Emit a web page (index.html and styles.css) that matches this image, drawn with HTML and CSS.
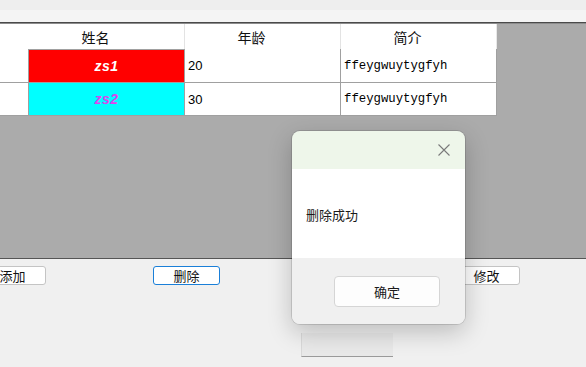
FILE: index.html
```html
<!DOCTYPE html>
<html>
<head>
<meta charset="utf-8">
<link rel="stylesheet" href="styles.css">
</head>
<body>
<div class="window">
  <div class="toolbar"><div class="tb-top"></div><div class="tb-bottom"></div></div>
  <div class="rule"></div>
  <div class="view">
    <div class="grid">
      <div class="h-cell h-corner"></div>
      <div class="h-cell">姓名</div>
      <div class="h-cell">年龄</div>
      <div class="h-cell h-last">简介</div>

      <div class="cell rowhead"></div>
      <div class="cell name red">zs1</div>
      <div class="cell num">20</div>
      <div class="cell intro">ffeygwuytygfyh</div>

      <div class="cell rowhead"></div>
      <div class="cell name cyan">zs2</div>
      <div class="cell num">30</div>
      <div class="cell intro">ffeygwuytygfyh</div>
    </div>
  </div>
  <div class="rule-bottom"></div>
  <div class="actions">
    <button class="btn btn-add">添加</button>
    <button class="btn btn-del">删除</button>
    <button class="btn btn-edit">修改</button>
  </div>
  <div class="lower">
    <div class="ghost"></div>
  </div>
</div>

<div class="dialog">
  <div class="dlg-head">
    <svg class="close" width="14" height="14" viewBox="0 0 14 14"><path d="M1.5 1.5 L12.5 12.5 M12.5 1.5 L1.5 12.5" stroke="#7a7a7a" stroke-width="1.1" fill="none"/></svg>
  </div>
  <div class="dlg-body">删除成功</div>
  <div class="dlg-foot"><button class="ok">确定</button></div>
</div>
</body>
</html>
```
FILE: styles.css
```css
html, body {
  margin: 0;
  padding: 0;
}
body {
  width: 586px;
  height: 367px;
  overflow: hidden;
  position: relative;
  background: #f0f0f0;
  font-family: "Noto Sans CJK SC", "Noto Sans", sans-serif;
}
.window {
  display: flex;
  flex-direction: column;
  height: 367px;
}
.toolbar { display: flex; flex-direction: column; }
.tb-top { height: 10px; background: #eeeeee; }
.tb-bottom { height: 12px; background: #f4f4f4; }
.rule { height: 1px; background: #4a4a4a; border-bottom: 1px solid #8c8c8c; }
.view {
  height: 234px;
  background: #ababab;
  display: flex;
  align-items: flex-start;
}
.grid {
  display: grid;
  grid-template-columns: 29px 156px 156px 156px;
  grid-template-rows: 25px 34px 33px;
}
.h-cell {
  background: #ffffff;
  box-sizing: border-box;
  border-right: 1px solid #e3e3e3;
  display: flex;
  align-items: center;
  justify-content: center;
  padding-right: 22px;
  font-size: 14px;
  color: #111;
  line-height: 1;
}
.h-corner { border-right: none; padding: 0; }
.h-cell:nth-child(2) { border-right: 1px solid #e3e3e3; }
.h-last { border-right: 1px solid #e8e8e8; }
.cell {
  background: #ffffff;
  box-sizing: border-box;
  border-bottom: 1px solid #a0a0a0;
  border-right: 1px solid #a0a0a0;
  display: flex;
  align-items: center;
  font-size: 13px;
  color: #000;
}
.rowhead { border-right: 1px solid #a0a0a0; }
.name {
  justify-content: center;
  font-family: "Liberation Sans", Arial, sans-serif;
  font-weight: bold;
  font-style: italic;
  font-size: 14px;
  letter-spacing: 0.5px;
}
.red { background: #ff0000; color: #ffffff; border-top: 1px solid #a0a0a0; }
.cyan { background: #00ffff; color: #dd44ee; }
.num {
  padding-left: 3px;
  font-family: "Liberation Sans", Arial, sans-serif;
  font-size: 13px;
}
.intro {
  padding-left: 3px;
  font-family: "Liberation Mono", "DejaVu Sans Mono", monospace;
  font-size: 12.3px;
}
.rule-bottom { height: 1px; background: #555555; }
.actions {
  display: flex;
  padding-top: 7px;
  height: 20px;
}
.btn {
  box-sizing: border-box;
  width: 67px;
  height: 19px;
  padding: 0;
  background: #ffffff;
  border: 1px solid #c4c4c4;
  border-radius: 3px;
  font-family: "Noto Sans CJK SC", sans-serif;
  font-size: 13px;
  line-height: 17px;
  color: #111;
}
.btn-add { margin-left: -21px; }
.btn-del { margin-left: 107px; border-color: #1a7fd8; }
.btn-edit { margin-left: 233px; }
.lower {
  padding-top: 47px;
  padding-left: 301px;
}
.ghost {
  width: 92px;
  height: 24px;
  box-sizing: border-box;
  background: #e9e9e9;
  border-left: 1px solid #d9d9d9;
  border-bottom: 1px solid #9a9a9a;
}
.dialog {
  position: absolute;
  left: 292px;
  top: 131px;
  width: 173px;
  height: 193px;
  border-radius: 8px;
  overflow: hidden;
  box-shadow: 0 0 0 1px rgba(0,0,0,0.12), 0 8px 24px rgba(0,0,0,0.22);
  display: flex;
  flex-direction: column;
}
.dlg-head {
  height: 38px;
  background: #eef6ea;
  display: flex;
  justify-content: flex-end;
  align-items: center;
  padding-right: 14px;
}
.dlg-body {
  height: 89px;
  background: #ffffff;
  display: flex;
  align-items: center;
  padding-left: 14px;
  padding-top: 2px;
  box-sizing: border-box;
  font-size: 13px;
  color: #1a1a1a;
}
.dlg-foot {
  flex: 1;
  background: #f0f0f0;
  display: flex;
  justify-content: flex-end;
  align-items: flex-start;
  padding-top: 18px;
  padding-right: 25px;
}
.ok {
  width: 106px;
  height: 31px;
  box-sizing: border-box;
  background: #fdfdfd;
  border: 1px solid #d5d5d5;
  border-radius: 4px;
  font-family: "Noto Sans CJK SC", sans-serif;
  font-size: 13px;
  color: #1a1a1a;
  padding: 0;
}
```
